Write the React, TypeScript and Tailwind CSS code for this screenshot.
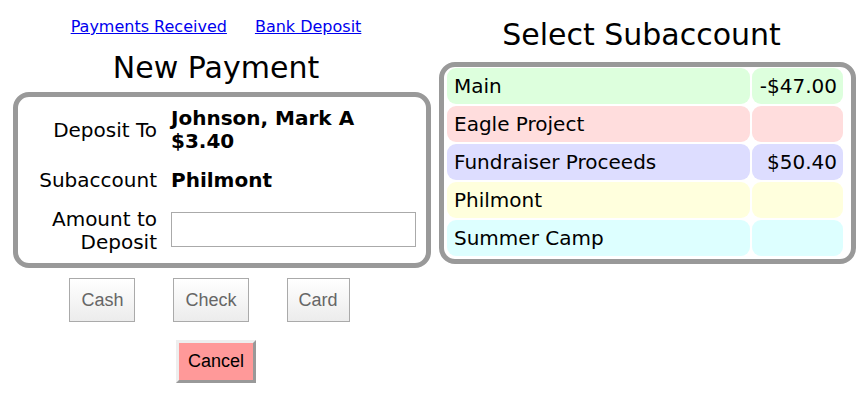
import React from "react";

const rows = [
  { name: "Main", amount: "-$47.00", bg: "bg-[#ddffdd]" },
  { name: "Eagle Project", amount: "", bg: "bg-[#ffdddd]" },
  { name: "Fundraiser Proceeds", amount: "$50.40", bg: "bg-[#ddddff]" },
  { name: "Philmont", amount: "", bg: "bg-[#ffffdd]" },
  { name: "Summer Camp", amount: "", bg: "bg-[#ddffff]" },
];

const App: React.FC = () => {
  return (
    <div className="flex w-[868px] h-[403px] bg-white text-black font-['DejaVu_Sans',sans-serif]">
      {/* left: new payment form */}
      <div className="flex flex-col w-[432px]">
        <div className="flex justify-center gap-[28px] pt-[17px] text-[16px] leading-[20px]">
          <a href="#" className="text-[#0000ee] underline">Payments Received</a>
          <a href="#" className="text-[#0000ee] underline">Bank Deposit</a>
        </div>
        <h1 className="mt-[13px] text-center text-[30px] leading-[36px]">New Payment</h1>
        <div className="ml-[13px] mt-[6px] w-[418px] h-[176px] border-[5px] border-[#999] rounded-[16px] pt-[10px]">
          <div className="grid grid-cols-[139px_245px] gap-x-[14px] gap-y-[16px] text-[20px] leading-[23px]">
            <div className="self-center text-right">Deposit To</div>
            <div className="font-bold">
              Johnson, Mark A
              <br />
              $3.40
            </div>
            <div className="text-right">Subaccount</div>
            <div className="font-bold">Philmont</div>
            <div className="text-right">
              Amount to
              <br />
              Deposit
            </div>
            <div className="flex items-center">
              <input
                type="text"
                className="w-[245px] h-[35px] -mt-[3px] border border-[#aaa] bg-white outline-none"
              />
            </div>
          </div>
        </div>
        <div className="flex justify-center gap-[38px] mt-[10px] pr-[13px] font-['Liberation_Sans',Arial,sans-serif] text-[18px]">
          {["Cash", "Check", "Card"].map((b) => (
            <button
              key={b}
              className="h-[44px] px-[11px] border border-[#aaa] bg-gradient-to-b from-white to-[#ececec] text-[#666]"
            >
              {b}
            </button>
          ))}
        </div>
        <div className="flex justify-center mt-[18px]">
          <button className="h-[43px] px-[9px] border-[3px] border-t-[#eee] border-l-[#eee] border-b-[#999] border-r-[#999] bg-[#ff9999] font-['Liberation_Sans',Arial,sans-serif] text-[18px] text-black">
            Cancel
          </button>
        </div>
      </div>

      {/* right: subaccount picker */}
      <div className="flex flex-col ml-[7px] w-[417px]">
        <h2 className="pt-[17px] pr-[12px] text-center text-[30px] leading-[36px]">Select Subaccount</h2>
        <div className="mt-[9px] h-[202px] border-[5px] border-[#999] rounded-[16px] pl-[3px] pt-[1px]">
          <div className="grid grid-cols-[303px_91px] gap-[2px] text-[20px]">
            {rows.map((r) => (
              <React.Fragment key={r.name}>
                <div className={`h-[36px] flex items-center px-[7px] rounded-[9px] ${r.bg}`}>{r.name}</div>
                <div className={`h-[36px] flex items-center justify-end px-[6px] rounded-[9px] ${r.bg}`}>{r.amount}</div>
              </React.Fragment>
            ))}
          </div>
        </div>
      </div>
    </div>
  );
};

export default App;
